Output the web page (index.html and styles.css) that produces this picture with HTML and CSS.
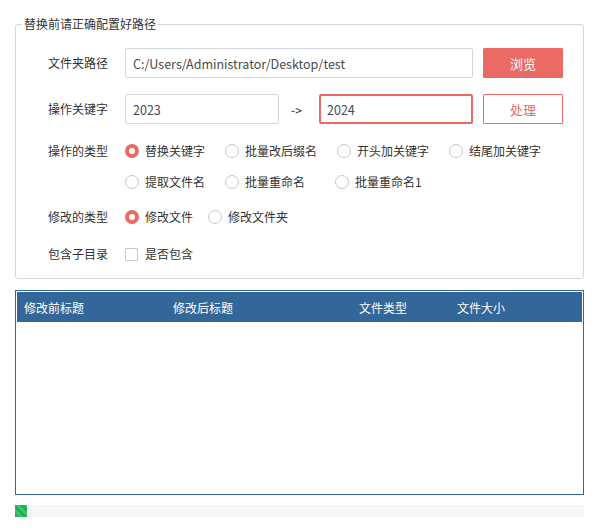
FILE: index.html
```html
<!DOCTYPE html>
<html lang="zh-CN">
<head>
<meta charset="utf-8">
<title>替换</title>
<link rel="stylesheet" href="styles.css">
</head>
<body>
<div class="app">
  <div class="group">
    <span class="group-title">替换前请正确配置好路径</span>
    <div class="row row-input">
      <span class="label">文件夹路径</span>
      <input class="field field-path" type="text" value="C:/Users/Administrator/Desktop/test">
      <button class="btn btn-fill">浏览</button>
    </div>
    <div class="row row-input row-2">
      <span class="label">操作关键字</span>
      <input class="field field-half" type="text" value="2023">
      <span class="arrow">-&gt;</span>
      <input class="field field-half field-active" type="text" value="2024">
      <button class="btn btn-line">处理</button>
    </div>
    <div class="row row-opt row-3">
      <span class="label">操作的类型</span>
      <div class="opts">
        <div class="opt-line">
          <label class="opt w100"><span class="radio checked"></span>替换关键字</label>
          <label class="opt w112"><span class="radio"></span>批量改后缀名</label>
          <label class="opt w112"><span class="radio"></span>开头加关键字</label>
          <label class="opt"><span class="radio"></span>结尾加关键字</label>
        </div>
        <div class="opt-line opt-line-2">
          <label class="opt w100"><span class="radio"></span>提取文件名</label>
          <label class="opt w110"><span class="radio"></span>批量重命名</label>
          <label class="opt"><span class="radio"></span>批量重命名1</label>
        </div>
      </div>
    </div>
    <div class="row row-opt row-4">
      <span class="label">修改的类型</span>
      <label class="opt w83"><span class="radio checked"></span>修改文件</label>
      <label class="opt"><span class="radio"></span>修改文件夹</label>
    </div>
    <div class="row row-opt row-5">
      <span class="label">包含子目录</span>
      <label class="opt"><span class="checkbox"></span>是否包含</label>
    </div>
  </div>

  <div class="table">
    <div class="thead">
      <span>修改前标题</span>
      <span>修改后标题</span>
      <span>文件类型</span>
      <span>文件大小</span>
    </div>
    <div class="tbody"></div>
  </div>

  <div class="progress"><div class="progress-chunk"></div></div>
</div>
</body>
</html>
```

FILE: styles.css
```css
* { box-sizing: border-box; }
html, body {
  margin: 0;
  padding: 0;
  background: #ffffff;
}
body {
  font-family: "Noto Sans CJK SC", "Noto Sans", sans-serif;
  font-size: 12px;
  color: #333333;
  width: 599px;
  height: 532px;
  overflow: hidden;
}
.app {
  padding: 24px 15px 0 15px;
}
.group {
  position: relative;
  width: 569px;
  height: 255px;
  border: 1px solid #d3d6dc;
  border-radius: 3px;
  padding: 23px 0 0 32px;
}
.group-title {
  position: absolute;
  top: -10px;
  left: 6px;
  padding: 0 2px;
  background: #ffffff;
  line-height: 18px;
  color: #333333;
}
.row {
  display: flex;
  align-items: center;
}
.label {
  width: 77px;
  flex: none;
  line-height: 20px;
}
.row-input { height: 30px; }
.row-2 { margin-top: 16px; }
.row-3 { margin-top: 17px; align-items: flex-start; }
.row-4 { margin-top: 15px; }
.row-5 { margin-top: 17px; }
.field {
  height: 30px;
  border: 1px solid #d3d6dc;
  border-radius: 2px;
  padding: 0 7px;
  font-family: "Noto Sans CJK SC", "Noto Sans", sans-serif;
  font-size: 12.5px;
  color: #4a4a4a;
  background: #ffffff;
  outline: none;
}
.field-path { width: 348px; }
.field-half { width: 154px; }
.field-active {
  border: 2px solid #ec6a65;
  padding: 0 6px;
}
.arrow {
  width: 40px;
  flex: none;
  padding-left: 12px;
  font-size: 12px;
}
.btn {
  width: 80px;
  height: 30px;
  margin-left: 10px;
  border-radius: 1px;
  font-family: "Noto Sans CJK SC", "Noto Sans", sans-serif;
  font-size: 13px;
  cursor: pointer;
}
.btn-fill {
  background: #ec6a65;
  border: 1px solid #ec6a65;
  color: #ffffff;
}
.btn-line {
  background: #ffffff;
  border: 1px solid #ec6a65;
  color: #ec6a65;
}
.opts {
  display: flex;
  flex-direction: column;
}
.opt-line {
  display: flex;
  height: 20px;
  align-items: center;
}
.opt-line-2 { margin-top: 11px; }
.opt {
  display: flex;
  align-items: center;
  height: 20px;
  line-height: 20px;
  white-space: nowrap;
}
.w100 { width: 100px; }
.w112 { width: 112px; }
.w110 { width: 110px; }
.w83 { width: 83px; }
.radio {
  width: 14px;
  height: 14px;
  border-radius: 50%;
  border: 1px solid #c4c7cc;
  margin-right: 6px;
  flex: none;
  background: #ffffff;
}
.radio.checked {
  border: 4.5px solid #ec6a65;
}
.checkbox {
  width: 13px;
  height: 13px;
  border: 1px solid #c4c7cc;
  border-radius: 1px;
  margin-right: 7px;
  flex: none;
}
.table {
  margin-top: 11px;
  width: 569px;
  height: 205px;
  border: 1px solid #336699;
  padding: 1px;
}
.thead {
  display: grid;
  grid-template-columns: 149px 186px 98px 1fr;
  height: 30px;
  align-items: center;
  background: #336699;
  color: #ffffff;
}
.thead span { padding-left: 7px; }
.progress {
  margin-top: 10px;
  width: 569px;
  height: 12px;
  background: #f5f6f8;
}
.progress-chunk {
  width: 12px;
  height: 12px;
  background: repeating-linear-gradient(45deg, #27ae55 0 3px, #3cc46a 3px 6px);
}
```
